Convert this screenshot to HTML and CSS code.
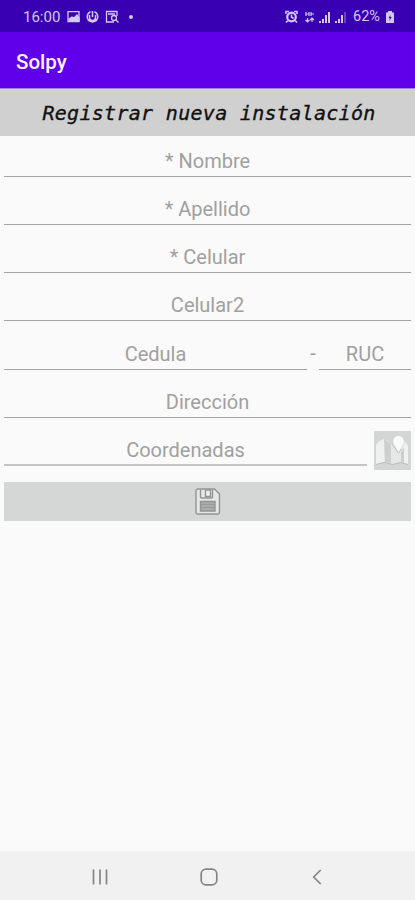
FILE: index.html
```html
<!DOCTYPE html>
<html lang="es">
<head>
<meta charset="utf-8">
<title>Solpy</title>
<link rel="stylesheet" href="styles.css">
</head>
<body>
<header class="status">
  <span class="clock">16:00</span>
  <svg class="left-icons" width="70" height="14" viewBox="0 0 70 14" fill="none" stroke="currentColor" stroke-width="1.3">
    <path d="M1 1.700h11v10H1z"/><path d="M2 11V9l3-2 2 1 3-3 2 3v3z" fill="currentColor"/>
    <path d="M23.500 1.700a5.300 5.300 0 1 0 4 0M22.500 5v2.500a3 3 0 0 0 6 0V5M25.500 1v6M21 11l2-2M30 11l-2-2" stroke-width="1.500"/>
    <path d="M43 12h-3.500V1.500H50V6M41 4h7"/><circle cx="47" cy="8" r="2.500"/><path d="M49 10l2.500 2.500M43 12h4"/>
    <circle cx="64" cy="7" r="2" fill="currentColor" stroke="none"/>
  </svg>
  <svg class="right-icons" width="62" height="14" viewBox="0 0 62 14" fill="none" stroke="currentColor" stroke-width="1.600">
    <circle cx="6.500" cy="7" r="4.300" stroke-width="2.200"/><path d="M6.500 4.500V7l2 1.500M1 4V1.500h3M12 4V1.500H9M3 10.500l-2 2M10 10.500l2 2"/>
    <path d="M21 2v4M24 2v4M21 4h3M26 2v4M26 4h3M22.500 8v4M20.500 10l2 2 2-2M27 12V8M25 10l2-2 2 2" stroke-width="1.200"/>
    <path d="M35 13v-2M38 13V9M41 13V5M44 13V2" stroke-width="2"/>
    <path d="M51 13v-2M54 13V9M57 13V5" stroke-width="2"/><path d="M60 13V2" opacity=".4"/>
  </svg>
  <span class="percent">62%</span>
  <svg class="battery" width="10" height="14" viewBox="0 0 10 14"><path d="M3 1h4v1.500h2V13H1V2.500h2z" fill="currentColor"/><path d="M5.500 5L3.500 8h1.200L4.300 11l2.400-4H5.300z" fill="#3900b3"/></svg>
</header>
<div class="appbar">Solpy</div>
<h1 class="title">Registrar nueva instalación</h1>
<main class="form">
  <div class="row"><div class="field">* Nombre</div></div>
  <div class="row"><div class="field">* Apellido</div></div>
  <div class="row"><div class="field">* Celular</div></div>
  <div class="row"><div class="field">Celular2</div></div>
  <div class="row"><div class="field">Cedula</div><span class="dash">-</span><div class="field ruc">RUC</div></div>
  <div class="row"><div class="field">Dirección</div></div>
  <div class="row"><div class="field soft">Coordenadas</div>
    <div class="map">
      <svg width="36" height="39" viewBox="0 0 36 39">
        <path d="M2 14q2-4 8-6l8 5 8-4q6 1 8 5v19l-7-2-8 2-9-2-8 2z" fill="#e6e7e7"/>
        <path d="M10 8l7 5v19l-6-1zM27 21l3-4v15l-3-1z" fill="#cdcfcf"/>
        <path d="M2 14q2-4 8-6v23l-8 2zM30 12l4 3v18l-4-1z" fill="#eff0f0"/>
        <path d="M2 33.500l8-2 9 2 8-2 7 2" fill="none" stroke="#bcbebe"/>
        <path d="M24.500 21l-5-9a5.300 5.300 0 1 1 10 0z" fill="#fafafa"/>
        <path d="M17.500 12l7 10 3-4" fill="none" stroke="#bcbebe"/>
      </svg>
    </div>
  </div>
  <div class="save">
    <svg width="26" height="28" viewBox="0 0 26 28" fill="none" stroke="#929494" stroke-width="1.400">
      <path d="M3 1h16.500l5 5V24q0 2-2 2H3q-2 0-2-2V3q0-2 2-2z" fill="#e5e6e6"/>
      <path d="M5.500 1.500V9q0 1 1 1h10q1 0 1-1V1.500"/><path d="M10.500 2h5v6.500h-5z" fill="#eee"/>
      <path d="M5.500 13.500h14.500v9.500H5.500z" fill="#aaabab"/><path d="M6 16.500h14M6 19.500h14" stroke-width=".7"/>
    </svg>
  </div>
</main>
<nav class="nav">
  <svg width="16" height="18" viewBox="0 0 16 18"><path d="M1.500 1.500v15M8 1.500v15M14.500 1.500v15"/></svg>
  <svg class="home" width="18" height="18" viewBox="0 0 18 18"><rect x="1.200" y="1.200" width="15.600" height="15.600" rx="4.800"/></svg>
  <svg width="10" height="18" viewBox="0 0 10 18"><path d="M8.700 2L1.700 9l7 7"/></svg>
</nav>
</body>
</html>
```
FILE: styles.css
```css
* { box-sizing: border-box; }
body {
  margin: 0;
  height: 900px;
  display: flex;
  flex-direction: column;
  background: #fafafa;
  font-family: Roboto, sans-serif;
  overflow: hidden;
}
svg { display: block; flex: none; }
.status {
  height: 32px;
  flex: none;
  display: flex;
  align-items: center;
  padding: 1px 20px 0 23px;
  background: #3900b3;
  color: #d3c8f1;
  font-size: 15px;
}
.clock { width: 38px; }
.left-icons { margin-left: 6px; }
.right-icons { margin-left: auto; }
.percent { width: 28px; margin: 0 4px 0 6px; font-size: 14.5px; }
.appbar {
  height: 57px;
  flex: none;
  padding-left: 16px;
  background: #6000ea;
  color: #f7f2ff;
  font-size: 20.5px;
  font-weight: 500;
  line-height: 60px;
  border-bottom: 1px solid #a184d4;
}
.title {
  height: 47px;
  flex: none;
  margin: 0;
  padding-left: 3px;
  background: #d0d0d0;
  color: #111;
  text-align: center;
  font: italic 400 20px/48px "DejaVu Sans Mono", monospace;
  letter-spacing: 0.3px;
  -webkit-text-stroke: 0.35px #111;
  white-space: nowrap;
}
.form { flex: 1; padding: 0 4px; }
.row { height: 48.15px; display: flex; }
.field {
  flex: 1;
  height: 41px;
  border-bottom: 1.5px solid #a3a3a3;
  color: #a0a0a0;
  text-align: center;
  font-size: 20px;
  line-height: 50px;
}
.soft { border-bottom: 2px solid #c4c4c4; }
.dash { width: 12px; text-align: center; color: #999; font-size: 20px; line-height: 48px; }
.ruc { flex: 0 0 92px; }
.map { width: 37px; height: 39px; margin: 6px 0 0 7px; background: #d4d6d6; }
.save {
  height: 39px;
  margin-top: 9px;
  padding-top: 2px;
  display: flex;
  align-items: center;
  justify-content: center;
  background: #d5d7d7;
}
.nav {
  height: 49px;
  flex: none;
  display: flex;
  align-items: center;
  justify-content: space-between;
  padding: 2px 93px 0 92px;
  background: #f1f1f1;
  fill: none;
  stroke: #858585;
  stroke-width: 1.7;
}
.home { margin-right: 3px; }
```
